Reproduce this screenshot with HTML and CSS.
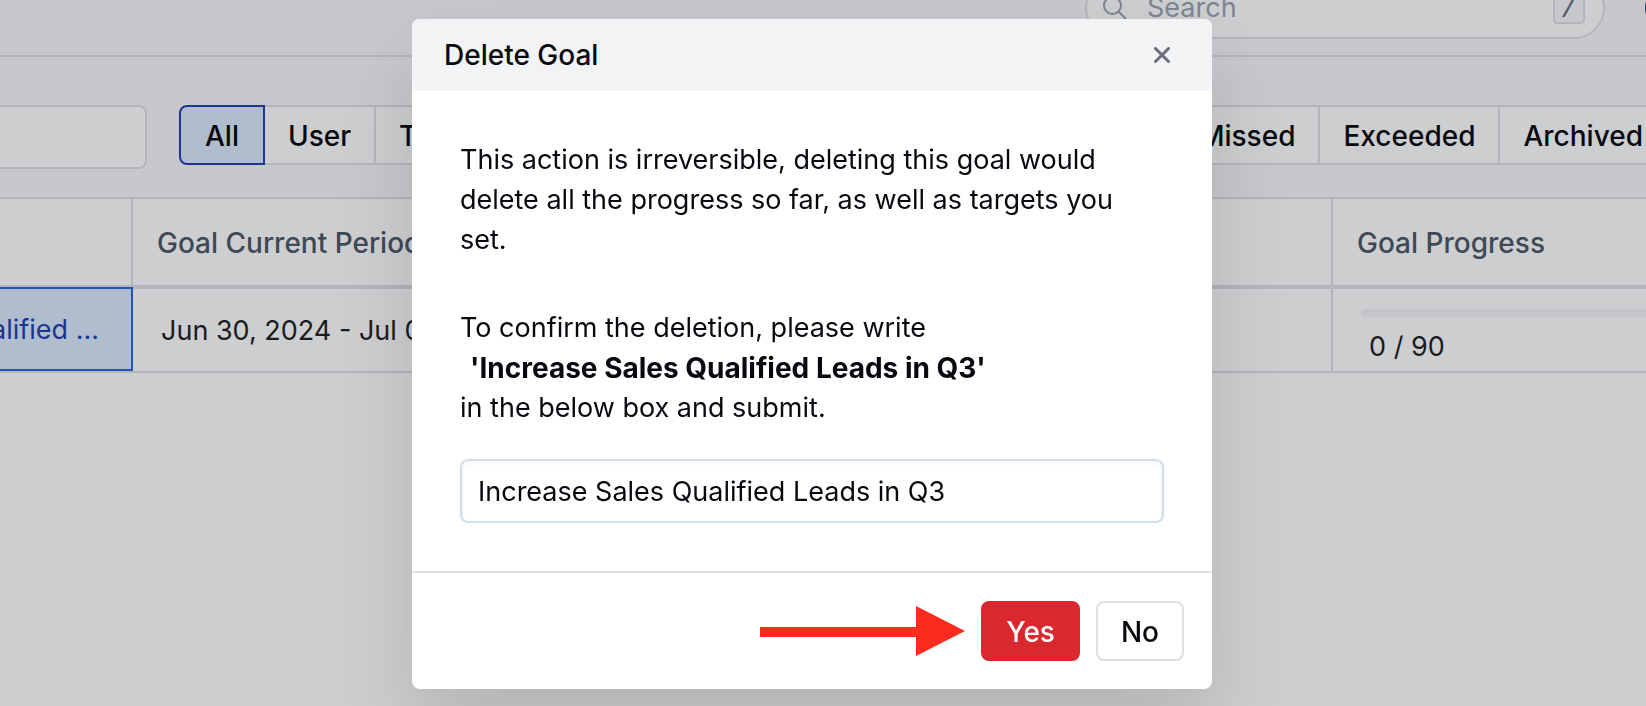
FILE: index.html
```html
<!DOCTYPE html>
<html lang="en">
<head>
<meta charset="UTF-8" />
<meta name="viewport" content="width=device-width, initial-scale=1.0" />
<title>Goals – Delete Goal</title>
<link rel="stylesheet" href="styles.css">
</head>
<body>
<div class="page">
  <!-- ------ TOP BAR ------ -->
  <header class="topbar">
    <label class="search">
      <svg class="search-icon" viewBox="0 0 24 24" aria-hidden="true">
        <circle cx="9.5" cy="9.5" r="8.5"/>
        <path d="M15.5 15.5 23 23"/>
      </svg>
      <input type="search" placeholder="Search" aria-label="Search">
      <kbd>/</kbd>
    </label>
    <span class="avatar"></span>
  </header>

  <!-- ------ FILTERS ------ -->
  <div class="toolbar">
    <input class="filter-input" type="text" aria-label="Filter goals">
    <div class="segments">
      <button class="segment active" type="button">All</button>
      <button class="segment" type="button">User</button>
      <button class="segment" type="button">Team</button>
    </div>
    <div class="segments status">
      <button class="segment" type="button">Missed</button>
      <button class="segment" type="button">Exceeded</button>
      <button class="segment" type="button">Archived</button>
    </div>
  </div>

  <!-- ------ GOALS TABLE ------ -->
  <table class="goals">
    <thead>
      <tr>
        <th class="col-name"></th>
        <th>Goal Current Period</th>
        <th class="col-progress">Goal Progress</th>
      </tr>
    </thead>
    <tbody>
      <tr>
        <td class="selected"><a class="goal-link" href="#">Increase Sales Qualified ...</a></td>
        <td class="period">Jun 30, 2024 - Jul 06, 2024</td>
        <td class="progress">
          <div class="bar"></div>
          <div class="count">0 / 90</div>
        </td>
      </tr>
    </tbody>
  </table>
</div>

<!-- ------ DELETE DIALOG ------ -->
<div class="overlay">
  <form class="modal" role="dialog" aria-modal="true" aria-labelledby="modalTitle">
    <div class="modal-header">
      <h1 id="modalTitle">Delete Goal</h1>
      <button class="close" type="button" aria-label="Close">
        <svg viewBox="0 0 16 16" aria-hidden="true"><path d="M1.5 1.5 14.5 14.5M14.5 1.5 1.5 14.5"/></svg>
      </button>
    </div>
    <div class="modal-body">
      <p>This action is irreversible, deleting this goal would delete all the progress so far, as well as targets you set.</p>
      <label for="confirmName">
        To confirm the deletion, please write
        <strong>'Increase Sales Qualified Leads in Q3'</strong>
        in the below box and submit.
      </label>
      <input id="confirmName" class="confirm-input" type="text" value="Increase Sales Qualified Leads in Q3">
    </div>
    <div class="modal-footer">
      <svg class="arrow" viewBox="0 0 205 50" aria-hidden="true"><path d="M0 21H156V0L205 25 156 50V31H0Z"/></svg>
      <button class="btn btn-danger" type="button">Yes</button>
      <button class="btn" type="button">No</button>
    </div>
  </form>
</div>
</body>
</html>
```

FILE: styles.css
```css
/* ---------- Root variables ---------- */
:root {
  --page: #c7c8cc;
  --surface: #cdced0;
  --line: #b4b5bc;
  --text: #08090f;
  --selected: #b0bdce;
  --label-size: 28px;      /* headings, buttons, bold text */
  --font-sans: Inter, "Helvetica Neue", Arial, sans-serif;
}

/* ---------- Global styles ---------- */
* { box-sizing: border-box; }

body {
  margin: 0;
  font-family: var(--font-sans);
  font-size: 27px;
  line-height: 40px;
  color: var(--text);
  background: var(--surface);
}

input, button { font: inherit; color: inherit; }

.page {
  height: 100vh;
  overflow: hidden;
}

/* ---------- Top bar (scrolled partly out of view) ---------- */
.topbar {
  display: flex;
  align-items: center;
  justify-content: flex-end;
  gap: 40px;
  height: 96px;
  margin: -39px -47px 0 0;
  background: var(--page);
  border-bottom: 2px solid var(--line);
}
.search {
  display: flex;
  align-items: center;
  gap: 20px;
  width: 520px;
  height: 62px;
  padding: 0 18px 0 16px;
  background: var(--surface);
  border: 2px solid var(--line);
  border-radius: 31px;
}
.search-icon {
  width: 24px;
  height: 24px;
  fill: none;
  stroke: #7f8490;
  stroke-width: 2;
}
.search input {
  flex: 1;
  min-width: 0;
  padding: 0;
  background: none;
  border: 0;
  outline: 0;
}
.search input::placeholder { color: #7f8490; opacity: 1; }
kbd {
  width: 32px;
  height: 32px;
  font-family: "Liberation Mono", monospace;
  font-size: var(--label-size);
  line-height: 32px;
  text-align: center;
  color: #555a66;
  background: var(--page);
  border: 2px solid var(--line);
  border-radius: 4px;
}
.avatar {
  width: 48px;
  height: 48px;
  background: #1e3a8f;
  border-radius: 50%;
}

/* ---------- Filters ---------- */
.toolbar {
  display: flex;
  align-items: flex-start;
  gap: 32px;
  height: 140px;
  padding-top: 48px;
  background: var(--page);
}
.filter-input {
  width: 155px;
  height: 64px;
  margin-left: -8px;
  background: var(--surface);
  border: 2px solid var(--line);
  border-radius: 8px;
}
.segments { display: flex; }
.segments.status {
  margin-left: auto;
  margin-right: -22px;
}
.segment {
  height: 60px;
  padding: 1px 23px 0;
  font-size: var(--label-size);
  font-weight: 500;
  background: var(--surface);
  border: 2px solid var(--line);
  border-left: 0;
}
.segment.active {
  padding: 1px 24px 0;
  background: var(--selected);
  border: 2px solid #1b3590;
  border-radius: 8px 0 0 8px;
}

/* ---------- Table ---------- */
.goals {
  width: 100%;
  table-layout: fixed;
  border-collapse: separate;
  border-spacing: 0;
  border-top: 2px solid var(--line);
  border-bottom: 2px solid var(--line);
}
.goals th {
  height: 88px;
  padding: 2px 24px 0;
  font-size: var(--label-size);
  font-weight: 500;
  text-align: left;
  color: #3f4855;
  border-bottom: 2px solid var(--line);
}
.goals td {
  height: 84px;
  padding: 2px 28px 0;
  color: #1a1b1e;
  border-top: 2px solid var(--line);
}
.goals .col-name {
  width: 133px;
  border-right: 2px solid var(--line);
}
.goals .col-progress {
  width: 315px;
  border-left: 2px solid var(--line);
}
.goals .selected {
  padding: 2px 32px 0 0;
  overflow: hidden;
  background: var(--selected);
  border: 2px solid #2353b8;
  border-left: 0;
}
.goal-link {
  display: flex;
  justify-content: flex-end;
  white-space: nowrap;
  color: #1b3590;
  text-decoration: none;
}
.goals .progress {
  padding-right: 0;
  vertical-align: top;
  padding-top: 20px;
  border-left: 2px solid var(--line);
}
.bar {
  height: 8px;
  margin-bottom: 10px;
  background: #c4c5c9;
  border-radius: 4px 0 0 4px;
}
.count { padding-left: 8px; }

/* ---------- Dialog ---------- */
.overlay {
  position: fixed;
  inset: 0;
  display: flex;
  justify-content: center;
  align-items: flex-start;
  padding: 19px 22px 0 0;
  overflow: hidden;
}
.modal {
  width: 800px;
  background: #fff;
  border-radius: 8px;
  box-shadow: 0 40px 80px rgba(0, 0, 0, 0.13);
}
.modal-header {
  display: flex;
  justify-content: space-between;
  align-items: center;
  height: 72px;
  padding: 0 32px;
  background: #f2f3f5;
  border-radius: 8px 8px 0 0;
}
.modal-header h1 {
  margin: 0;
  font-size: var(--label-size);
  font-weight: 500;
}
.close {
  display: flex;
  padding: 10px;
  background: none;
  border: 0;
}
.close svg {
  width: 16px;
  height: 16px;
  stroke: #68707f;
  stroke-width: 3;
  stroke-linecap: round;
}
.modal-body {
  display: flex;
  flex-direction: column;
  padding: 49px 48px 48px;
}
.modal-body p { margin: 0 0 48px; }
.modal-body strong {
  display: block;
  padding-left: 10px;
  font-size: var(--label-size);
  font-weight: 700;
}
.confirm-input {
  height: 64px;
  margin-top: 31px;
  padding: 1px 16px 0;
  background: #fff;
  border: 2px solid #d3dde6;
  border-radius: 8px;
  box-shadow: inset 0 2px 4px #eef6fc;
}
.modal-footer {
  display: flex;
  justify-content: flex-end;
  align-items: center;
  gap: 16px;
  padding: 28px;
  border-top: 2px solid #e0e1e7;
}
.arrow {
  width: 205px;
  height: 50px;
  fill: #fc2b1e;
}
.btn {
  height: 60px;
  padding: 1px 23px 0;
  font-size: var(--label-size);
  font-weight: 500;
  background: #fff;
  border: 2px solid #e0e1e7;
  border-radius: 8px;
}
.btn-danger {
  color: #fff;
  background: #d9292e;
  border-color: #d9292e;
}
```
